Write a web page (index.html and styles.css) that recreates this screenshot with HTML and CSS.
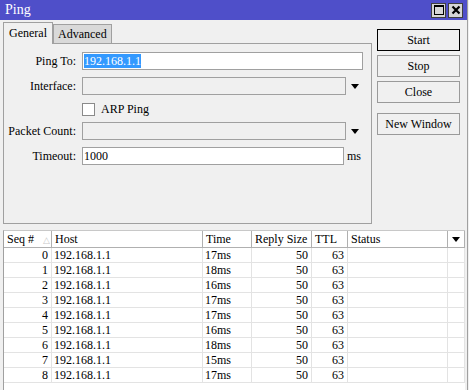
FILE: index.html
```html
<!DOCTYPE html>
<html lang="en">
<head>
    <meta charset="UTF-8">
    <title>Ping</title>
    <link rel="stylesheet" href="styles.css">
</head>
<body>
    <div class="window">
        <!-- Title bar -->
        <div class="titlebar">
            <span class="title">Ping</span>
            <div class="title-btns">
                <span class="tbtn"><span class="max-glyph"></span></span>
                <span class="tbtn">
                    <svg width="10" height="10" viewBox="0 0 10 10"><path d="M1.5 1.5 L8.5 8.5 M8.5 1.5 L1.5 8.5" stroke="#000" stroke-width="2.2"/></svg>
                </span>
            </div>
        </div>

        <div class="main">
            <div class="left">
                <div class="tabs">
                    <div class="tab active">General</div>
                    <div class="tab">Advanced</div>
                </div>
                <div class="panel">
                    <div class="row">
                        <span class="label">Ping To:</span>
                        <div class="field wide"><span class="selected">192.168.1.1</span></div>
                    </div>
                    <div class="row">
                        <span class="label">Interface:</span>
                        <div class="field combo disabled"></div>
                        <span class="arrow"></span>
                    </div>
                    <div class="row check-row">
                        <span class="label"></span>
                        <span class="checkbox"></span>
                        <span class="check-text">ARP Ping</span>
                    </div>
                    <div class="row">
                        <span class="label">Packet Count:</span>
                        <div class="field combo disabled"></div>
                        <span class="arrow"></span>
                    </div>
                    <div class="row">
                        <span class="label">Timeout:</span>
                        <div class="field timeout">1000</div>
                        <span class="unit">ms</span>
                    </div>
                </div>
            </div>

            <div class="actions">
                <button class="btn default">Start</button>
                <button class="btn">Stop</button>
                <button class="btn">Close</button>
                <button class="btn spaced">New Window</button>
            </div>
        </div>

        <!-- Results list -->
        <div class="results">
            <div class="grid-row head">
                <div class="cell">Seq # <span class="sort">&#9651;</span></div>
                <div class="cell">Host</div>
                <div class="cell">Time</div>
                <div class="cell">Reply Size</div>
                <div class="cell">TTL</div>
                <div class="cell">Status</div>
                <div class="cell menu"><span class="arrow small"></span></div>
            </div>
            <div class="grid-row"><div class="cell num">0</div><div class="cell">192.168.1.1</div><div class="cell">17ms</div><div class="cell num">50</div><div class="cell num">63</div><div class="cell"></div><div class="cell"></div></div>
            <div class="grid-row"><div class="cell num">1</div><div class="cell">192.168.1.1</div><div class="cell">18ms</div><div class="cell num">50</div><div class="cell num">63</div><div class="cell"></div><div class="cell"></div></div>
            <div class="grid-row"><div class="cell num">2</div><div class="cell">192.168.1.1</div><div class="cell">16ms</div><div class="cell num">50</div><div class="cell num">63</div><div class="cell"></div><div class="cell"></div></div>
            <div class="grid-row"><div class="cell num">3</div><div class="cell">192.168.1.1</div><div class="cell">17ms</div><div class="cell num">50</div><div class="cell num">63</div><div class="cell"></div><div class="cell"></div></div>
            <div class="grid-row"><div class="cell num">4</div><div class="cell">192.168.1.1</div><div class="cell">17ms</div><div class="cell num">50</div><div class="cell num">63</div><div class="cell"></div><div class="cell"></div></div>
            <div class="grid-row"><div class="cell num">5</div><div class="cell">192.168.1.1</div><div class="cell">16ms</div><div class="cell num">50</div><div class="cell num">63</div><div class="cell"></div><div class="cell"></div></div>
            <div class="grid-row"><div class="cell num">6</div><div class="cell">192.168.1.1</div><div class="cell">18ms</div><div class="cell num">50</div><div class="cell num">63</div><div class="cell"></div><div class="cell"></div></div>
            <div class="grid-row"><div class="cell num">7</div><div class="cell">192.168.1.1</div><div class="cell">15ms</div><div class="cell num">50</div><div class="cell num">63</div><div class="cell"></div><div class="cell"></div></div>
            <div class="grid-row"><div class="cell num">8</div><div class="cell">192.168.1.1</div><div class="cell">17ms</div><div class="cell num">50</div><div class="cell num">63</div><div class="cell"></div><div class="cell"></div></div>
        </div>
    </div>
</body>
</html>
```

FILE: styles.css
```css
* {
    margin: 0;
    padding: 0;
    box-sizing: border-box;
    font-family: "Liberation Serif", "Times New Roman", serif;
}

body {
    width: 469px;
    height: 390px;
    overflow: hidden;
    background: #f0f0f0;
    font-size: 12px;
    color: #000;
}

.window {
    width: 468px;
    height: 390px;
    border-right: 1px solid #a0a0a0;
    background: #f0f0f0;
}

.titlebar {
    height: 20px;
    background: #4f4fc9;
    display: flex;
    align-items: center;
    justify-content: space-between;
    padding: 0 4px 0 5px;
}

.title {
    color: #fff;
    font-size: 14px;
}

.title-btns {
    display: flex;
    gap: 2px;
}

.tbtn {
    width: 15px;
    height: 15px;
    background: #d6d6d6;
    border: 1px solid #404040;
    display: flex;
    align-items: center;
    justify-content: center;
}

.max-glyph {
    width: 10px;
    height: 10px;
    border: 1px solid #000;
    border-top-width: 2px;
}

.main {
    display: flex;
}

.left {
    margin-left: 3px;
    width: 369px;
}

.tabs {
    display: flex;
    align-items: flex-end;
    height: 23px;
    padding-top: 2px;
}

.tab {
    height: 19px;
    padding: 0 4px;
    background: #d9d9d9;
    border: 1px solid #a0a0a0;
    border-bottom: none;
    line-height: 18px;
}

.tab.active {
    height: 22px;
    width: 50px;
    background: #f0f0f0;
    padding-left: 5px;
    line-height: 20px;
    position: relative;
    top: 1px;
}

.panel {
    height: 181px;
    border: 1px solid #a0a0a0;
    padding-top: 8px;
}

.row {
    display: flex;
    align-items: center;
    height: 18px;
    margin-bottom: 7px;
}

.check-row {
    height: 14px;
    margin-bottom: 6px;
}

.label {
    width: 72px;
    text-align: right;
    margin-right: 6px;
    white-space: nowrap;
}

.field {
    height: 18px;
    background: #fff;
    border: 1px solid #a0a0a0;
    padding-left: 1px;
    line-height: 16px;
}

.field.wide {
    width: 281px;
}

.field.combo {
    width: 264px;
}

.field.timeout {
    width: 262px;
}

.field.disabled {
    background: #f0f0f0;
}

.selected {
    background: #3399ff;
    color: #fff;
}

.arrow {
    margin-left: 5px;
    width: 0;
    height: 0;
    border-left: 4px solid transparent;
    border-right: 4px solid transparent;
    border-top: 5px solid #000;
}

.checkbox {
    width: 13px;
    height: 13px;
    background: #fff;
    border: 1px solid #8a8a8a;
}

.check-text {
    margin-left: 6px;
}

.unit {
    margin-left: 3px;
}

.actions {
    margin-left: 5px;
    margin-top: 9px;
    width: 83px;
    display: flex;
    flex-direction: column;
    gap: 4px;
}

.btn {
    height: 22px;
    background: #f0f0f0;
    border: 1px solid #9a9a9a;
    font-size: 12px;
    color: #000;
}

.btn.default {
    border: 1px solid #000;
}

.btn.spaced {
    margin-top: 6px;
}

.results {
    margin: 6px 0 0 3px;
    width: 462px;
    height: 170px;
    background: #fff;
    border-left: 1px solid #a0a0a0;
    border-top: 1px solid #c8c8c8;
}

.grid-row {
    display: grid;
    grid-template-columns: 48px 151px 49px 60px 36px 100px 17px;
    height: 15px;
    border-bottom: 1px solid #e3e3e3;
}

.grid-row .cell {
    border-right: 1px solid #e3e3e3;
    padding: 0 3px 0 2px;
    line-height: 14px;
    white-space: nowrap;
    overflow: hidden;
}

.grid-row.head {
    height: 17px;
    border-bottom: 1px solid #b0b0b0;
}

.grid-row.head .cell {
    border-right: 1px solid #b0b0b0;
    line-height: 16px;
    padding-left: 3px;
}

.cell.num {
    text-align: right;
}

.sort {
    color: #c8c8c8;
    font-size: 9px;
    margin-left: 6px;
}

.cell.menu {
    display: flex;
    align-items: center;
    justify-content: center;
}

.arrow.small {
    margin-left: 0;
}
```
